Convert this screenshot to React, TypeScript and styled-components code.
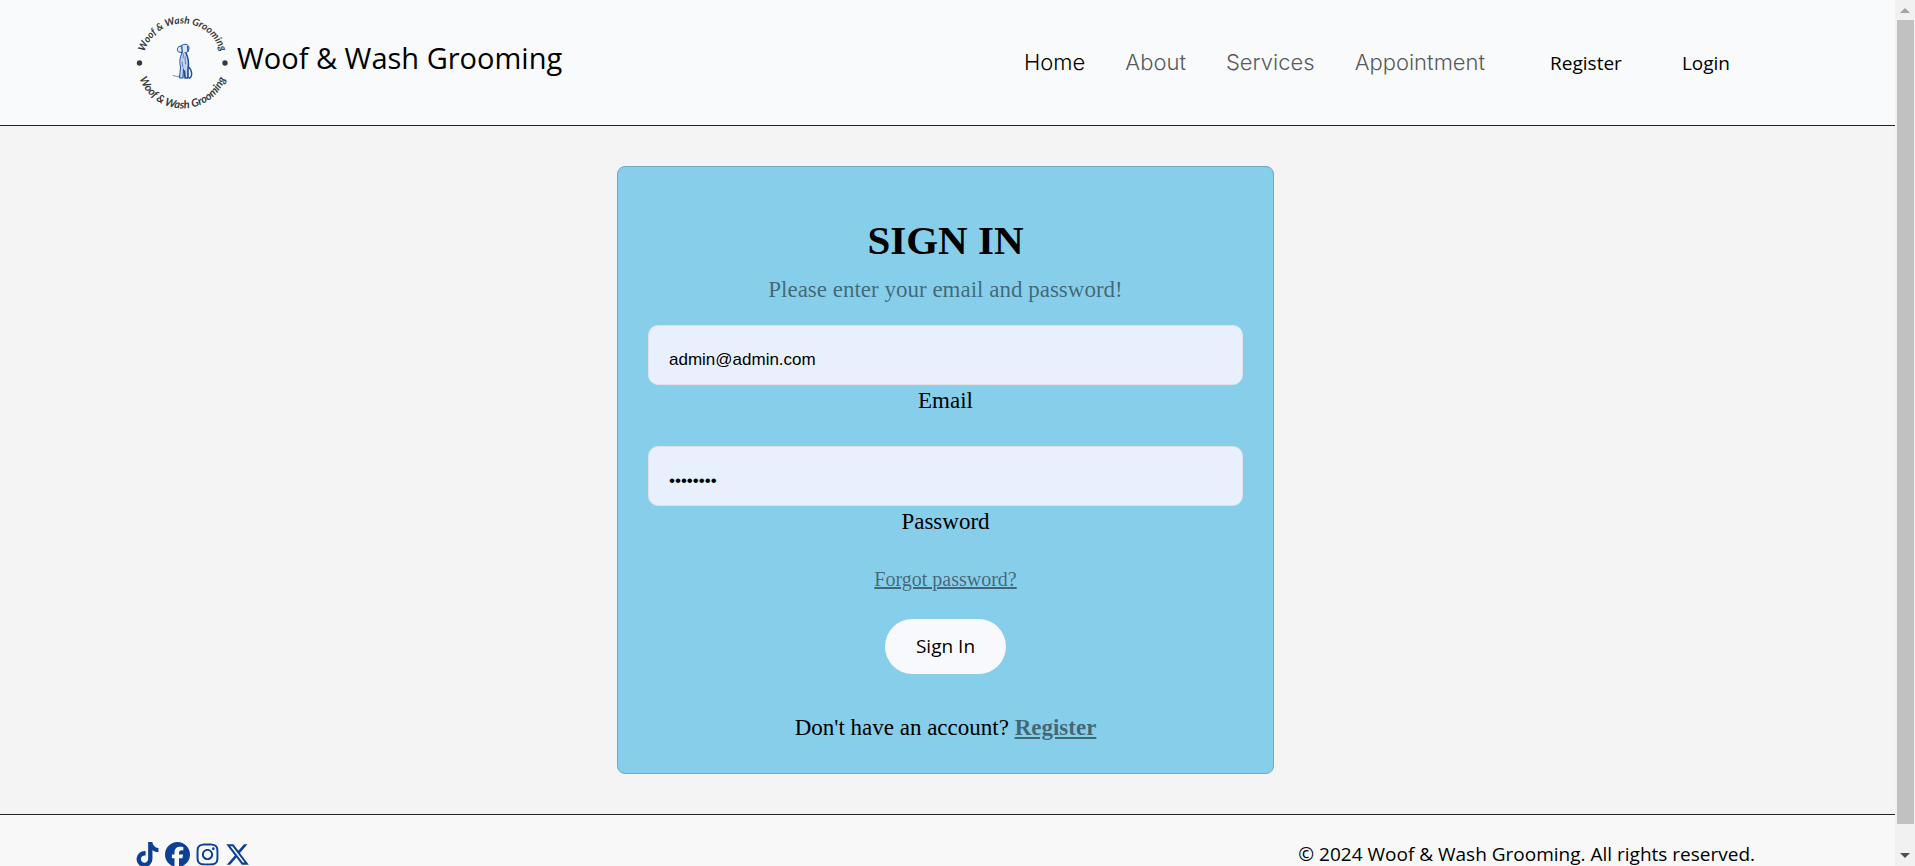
import React from "react";
import styled, { createGlobalStyle } from "styled-components";
import { FaTiktok, FaFacebook, FaInstagram, FaXTwitter } from "react-icons/fa6";

const sans = `"Open Sans", "Liberation Sans", sans-serif`;
const serif = `"Liberation Serif", serif`;

const GlobalStyle = createGlobalStyle`
  *, *::before, *::after { box-sizing: border-box; }
  body { margin: 0; font-family: ${sans}; font-size: 19px; line-height: 30px; color: #000; }
  a { color: inherit; text-decoration: none; }
`;

const Window = styled.div`
  display: grid;
  grid-template-columns: minmax(0, 1fr) 20px;
  height: 100vh;
  overflow: hidden;
`;

const Page = styled.div`
  display: flex;
  flex-direction: column;
  overflow: hidden;
  background: #f4f4f4;
`;

const Header = styled.header`
  display: flex;
  flex-shrink: 0;
  align-items: center;
  justify-content: space-between;
  padding: 15px 165px 15px 135px;
  background: #f8fafc;
  border-bottom: 1px solid #212529;
`;

const Brand = styled.a`
  display: flex;
  align-items: center;
  gap: 7px;
  font-size: 29px;
  line-height: 36px;
`;

const BrandName = styled.span`
  padding-bottom: 10px;
`;

const Logo = styled.svg`
  display: block;
  width: 95px;
  height: 95px;
  overflow: visible;
`;

const Nav = styled.nav`
  display: flex;
  align-items: center;
  gap: 40px;
  font-family: Inter, sans-serif;
  font-size: 22px;
  font-weight: 300;
`;

const NavLink = styled.a<{ $active?: boolean }>`
  padding-bottom: 2px;
  color: ${(p) => (p.$active ? "#000" : "#595a5b")};
`;

const Account = styled.div`
  display: flex;
  gap: 60px;
  padding-left: 25px;
  font-family: ${sans};
  font-size: 19px;
  font-weight: 400;
`;

const Main = styled.main`
  display: flex;
  flex-shrink: 0;
  justify-content: center;
  padding: 40px 4px 40px 0;
`;

const Card = styled.form`
  display: flex;
  flex-direction: column;
  align-items: center;
  width: 100%;
  max-width: 657px;
  padding: 49px 30px 30px;
  background: #87ceeb;
  border: 1px solid #6faac2;
  border-radius: 8px;
  font-family: ${serif};
  font-size: 23px;
`;

const Title = styled.h1`
  margin: 0 0 10px;
  font-size: 41px;
  line-height: 48px;
`;

const Hint = styled.p`
  margin: 0 0 19px;
  line-height: 32px;
  color: rgba(0, 0, 0, 0.5);
`;

const Field = styled.div`
  display: flex;
  flex-direction: column;
  align-items: center;
  width: 100%;
  margin-bottom: 29px;
  line-height: 32px;
`;

const Input = styled.input`
  width: 100%;
  height: 60px;
  padding: 19px 20px 9px;
  background: #e8f0fe;
  border: 1px solid #dee2e6;
  border-radius: 10px;
  font-family: "Liberation Sans", Arial, sans-serif;
  font-size: 17px;
  color: #000;
`;

const MutedLink = styled.a`
  color: rgba(0, 0, 0, 0.5);
  text-decoration: underline;
`;

const ForgotLink = styled(MutedLink)`
  font-size: 20px;
  line-height: 24px;
`;

const RegisterLink = styled(MutedLink)`
  font-weight: 700;
`;

const SubmitButton = styled.button`
  height: 55px;
  margin: 28px 0 39px;
  padding: 0 31px 2px;
  background: #f8f9fc;
  border: 0;
  border-radius: 28px;
  font-family: ${sans};
  font-size: 19px;
  color: #000;
`;

const Footer = styled.footer`
  display: flex;
  flex-shrink: 0;
  align-items: center;
  justify-content: space-between;
  padding: 24px 140px 24px 135px;
  background: #f8f8f8;
  border-top: 1px solid #212529;
`;

const Social = styled.div`
  display: flex;
  gap: 5px;
  color: #0d4094;
  font-size: 25px;

  a { display: flex; }
  svg { display: block; width: 25px; height: 25px; }
`;

const ScrollTrack = styled.div`
  display: flex;
  flex-direction: column;
  align-items: center;
  background: #f1f1f1;
`;

const ScrollArrow = styled.svg`
  display: block;
  flex-shrink: 0;
  width: 20px;
  height: 20px;
`;

const ScrollThumb = styled.div`
  width: 17px;
  flex: 804 1 0;
  background: #c1c1c1;
`;

const ScrollRest = styled.div`
  flex: 22 1 0;
`;

function BrandLogo() {
  return (
    <Logo viewBox="0 0 95 95" aria-hidden="true">
      <defs>
        <path id="arc-top" d="M8 48 A39.5 39.5 0 0 1 87 48" />
        <path id="arc-bottom" d="M1.5 47.5 A46 46 0 0 0 93.5 47.5" />
      </defs>
      <g fill="#37393b" fontFamily="Lato, sans-serif" fontStyle="italic" fontWeight="700" textAnchor="middle">
        <text fontSize="10">
          <textPath href="#arc-top" startOffset="50%">Woof &amp; Wash Grooming</textPath>
        </text>
        <text fontSize="11">
          <textPath href="#arc-bottom" startOffset="50%">Woof &amp; Wash Grooming</textPath>
        </text>
        <circle cx="4.5" cy="48" r="2.7" />
        <circle cx="90" cy="48" r="2.7" />
      </g>
      <path d="M47 37 C45 43 45 48 46 53 L45 63 L54 63 L53 52 L52 38 Z" fill="#c3d2ec" />
      <path d="M43 33 C43 31 46 30 47 31 C50 28 54 30 53.5 34 C53 37 50 38 48 37 C45 38 42 36 43 33 Z" fill="#dbe5f5" />
      <g fill="none" stroke="#1d4da0" strokeLinecap="round" strokeLinejoin="round">
        <path strokeWidth="1" d="M46 31 C49 28 54 29 54 33 C54 36 52 38 50 37.5 M46 31 C42 31 41.5 35 43.5 37 L47 37.5" />
        <path strokeWidth="1.2" d="M47 31.5 C46 33 48 35 47 38 M52.5 31.5 L53 36.5" />
        <path strokeWidth="1" d="M47 38 C44.5 43 44.5 47 45.5 52 L44.5 63 L48 63 L48.5 54" />
        <path strokeWidth="1.6" d="M51 38 C53.5 43 54 48 53 54 L53 63 L50 63 L49.5 56" />
        <path strokeWidth="1.4" d="M53.5 52 C57.5 55 57.5 62 54.5 63" />
        <path strokeWidth="0.6" d="M48.5 39 L48 43 M50 42 L50.5 49 M47 47 L48 52 M38 60.5 L42 61.5 L45 61" />
      </g>
    </Logo>
  );
}

export default function App() {
  return (
    <>
      <GlobalStyle />
      <Window>
        <Page>
          <Header>
            <Brand href="#">
              <BrandLogo />
              <BrandName>Woof &amp; Wash Grooming</BrandName>
            </Brand>
            <Nav>
              <NavLink href="#" $active>Home</NavLink>
              <NavLink href="#">About</NavLink>
              <NavLink href="#">Services</NavLink>
              <NavLink href="#">Appointment</NavLink>
              <Account>
                <a href="#">Register</a>
                <a href="#">Login</a>
              </Account>
            </Nav>
          </Header>
          <Main>
            <Card onSubmit={(e) => e.preventDefault()}>
              <Title>SIGN IN</Title>
              <Hint>Please enter your email and password!</Hint>
              <Field>
                <Input id="email" type="email" defaultValue="admin@admin.com" />
                <label htmlFor="email">Email</label>
              </Field>
              <Field>
                <Input id="password" type="password" defaultValue="password" />
                <label htmlFor="password">Password</label>
              </Field>
              <ForgotLink href="#">Forgot password?</ForgotLink>
              <SubmitButton type="submit">Sign In</SubmitButton>
              <div>
                Don't have an account? <RegisterLink href="#">Register</RegisterLink>
              </div>
            </Card>
          </Main>
          <Footer>
            <Social>
              <a href="#" aria-label="TikTok"><FaTiktok /></a>
              <a href="#" aria-label="Facebook"><FaFacebook /></a>
              <a href="#" aria-label="Instagram"><FaInstagram /></a>
              <a href="#" aria-label="X"><FaXTwitter /></a>
            </Social>
            <span>© 2024 Woof &amp; Wash Grooming. All rights reserved.</span>
          </Footer>
        </Page>
        <ScrollTrack aria-hidden="true">
          <ScrollArrow viewBox="0 0 20 20"><path d="M5 13 L10 8 L15 13 Z" fill="#a3a3a3" /></ScrollArrow>
          <ScrollThumb />
          <ScrollRest />
          <ScrollArrow viewBox="0 0 20 20"><path d="M5 7 L10 12 L15 7 Z" fill="#505050" /></ScrollArrow>
        </ScrollTrack>
      </Window>
    </>
  );
}
